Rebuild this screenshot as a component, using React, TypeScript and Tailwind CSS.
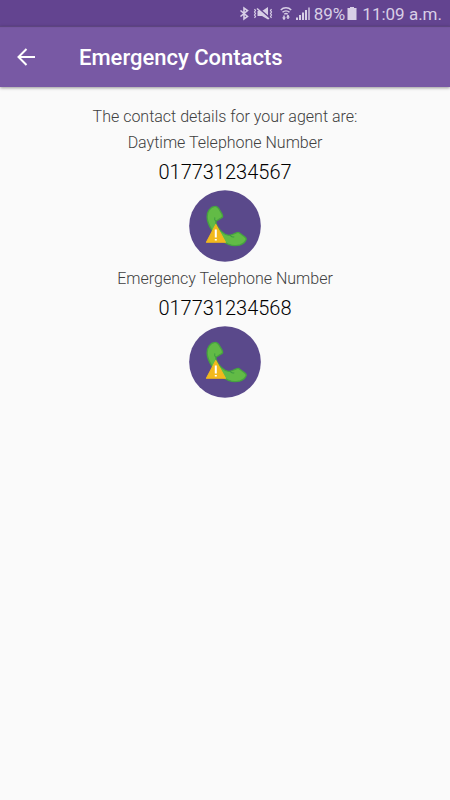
import { ReactNode } from 'react'

const contacts = [
  { label: 'Daytime Telephone Number', number: '017731234567' },
  { label: 'Emergency Telephone Number', number: '017731234568' },
]

function StatusBar() {
  return (
    <div className="flex h-[26px] items-center justify-end bg-[#634490] pr-2 pt-0.5 text-[#d8cfe6]">
      <svg className="h-4 w-3" viewBox="0 0 12 16" fill="none" stroke="currentColor" strokeWidth="1.6" aria-label="Bluetooth">
        <path d="M2.500 4.500l7 6L6 13V2l3.500 2.500-7 6" />
      </svg>
      <svg className="ml-[3px] h-4 w-5" viewBox="0 0 20 16" fill="none" stroke="currentColor" aria-label="Vibrate">
        <path d="M1.500 3l1 1.500-1 1.500 1 1.500-1 1.500 1 1.500-1 1.500M18.500 3l-1 1.500 1 1.500-1 1.500 1 1.500-1 1.500 1 1.500" strokeWidth="1.200" />
        <path d="M4.500 5H9l6-4v12.500L9 10H4.500z" fill="currentColor" stroke="none" />
        <path d="M5 2l11.500 10" stroke="#634490" strokeWidth="2" />
        <path d="M4 2.500l12 10.500" strokeWidth="1.600" />
      </svg>
      <svg className="ml-[7px] h-4 w-3" viewBox="0 0 12 16" fill="none" stroke="currentColor" strokeWidth="1.500" aria-label="Wi-Fi">
        <path d="M.8 4C3.500 1.100 8.500 1.100 11.200 4M2.500 6.300c2-1.900 5-1.900 7 0M4.300 8.300c1-.9 2.400-.9 3.400 0" />
        <path d="M4 13.500v-4M8 9v4" />
        <path d="M2 11.500l2 2.500 2-2.500zM6 11.500l2-2.500 2 2.500z" fill="currentColor" stroke="none" />
      </svg>
      <svg className="ml-[3px] h-4 w-4" viewBox="0 0 16 16" fill="currentColor" aria-label="Signal">
        <path d="M1 11.500h2V14H1zM4 9h2v5H4zM7 6.500h2V14H7zM10 4h2v10h-2z" />
        <path d="M13 1.500h2V14h-2z" opacity=".7" />
      </svg>
      <span className="ml-[3px] text-[17px] leading-6">89%</span>
      <svg className="ml-0.5 h-4 w-2.5" viewBox="0 0 10 16" fill="currentColor" aria-label="Battery">
        <path d="M3 1h4v1h2.500v12H.5V2H3z" />
      </svg>
      <span className="ml-[5px] text-[17px] leading-6">11:09 a.m.</span>
    </div>
  )
}

function Header({ children }: { children: ReactNode }) {
  return (
    <header className="flex h-[61px] items-center bg-[#7859a4] px-4 pt-[3px] text-white shadow-[0_1px_3px_rgba(0,0,0,0.4),inset_0_2px_1px_-1px_rgba(0,0,0,0.25)]">
      <button type="button" aria-label="Back" className="flex size-5 items-center justify-center">
        <svg className="size-5" viewBox="0 0 20 20" fill="none" stroke="currentColor" strokeWidth="2">
          <path d="M19 9H3M10.500 1l-8 8 8 8" />
        </svg>
      </button>
      <h1 className="ml-[43px] text-[22px] font-medium leading-7">{children}</h1>
    </header>
  )
}

function CallIcon() {
  return (
    <svg className="size-[72px]" viewBox="27 28 215 215" aria-hidden="true">
      <circle cx="134.500" cy="135.500" r="107" fill="#5a498b" />
      <path
        d="M104 77C91 78 80 93 81 109c2 26 21 53 44 70 17 13 38 18 55 13 8-3 15-9 18-17 0-4-3-6-7-9l-12-9c-3-3-7-3-11-1-8 3-12 6-18 7-10 2-20-5-28-13-9-9-14-18-15-26 0-4 3-5 7-7l10-6c4-2 4-6 2-10l-8-14c-4-7-8-11-14-10z"
        fill="#62bb46"
        stroke="#46a340"
        strokeWidth="4"
        strokeLinejoin="round"
      />
      <path d="M107 121c-3-2-4-6-3-10M150 163c2 4 6 6 11 5" fill="none" stroke="#3d9a42" strokeWidth="3" strokeLinecap="round" />
      <path d="M107 131l29 53H79z" fill="#f2b91d" stroke="#f2b91d" strokeWidth="3" strokeLinejoin="round" />
      <path d="M104 146h6v24h-6zM104 174h6v5h-6z" fill="#fff" />
    </svg>
  )
}

export default function App() {
  return (
    <div className="min-h-screen bg-[#fafafa] font-[Roboto,sans-serif]">
      <StatusBar />
      <Header>Emergency Contacts</Header>
      <main className="flex flex-col items-center pt-[17px] text-center">
        <p className="text-base font-light leading-[26px] text-[#404040]">The contact details for your agent are:</p>
        {contacts.map((contact) => (
          <section key={contact.number} className="mb-1 flex flex-col items-center">
            <h2 className="text-base font-light leading-[26px] text-[#404040]">{contact.label}</h2>
            <p className="text-[20px] font-light leading-8 text-black">{contact.number}</p>
            <button type="button" aria-label={`Call ${contact.number}`} className="mt-0.5 rounded-full">
              <CallIcon />
            </button>
          </section>
        ))}
      </main>
    </div>
  )
}
